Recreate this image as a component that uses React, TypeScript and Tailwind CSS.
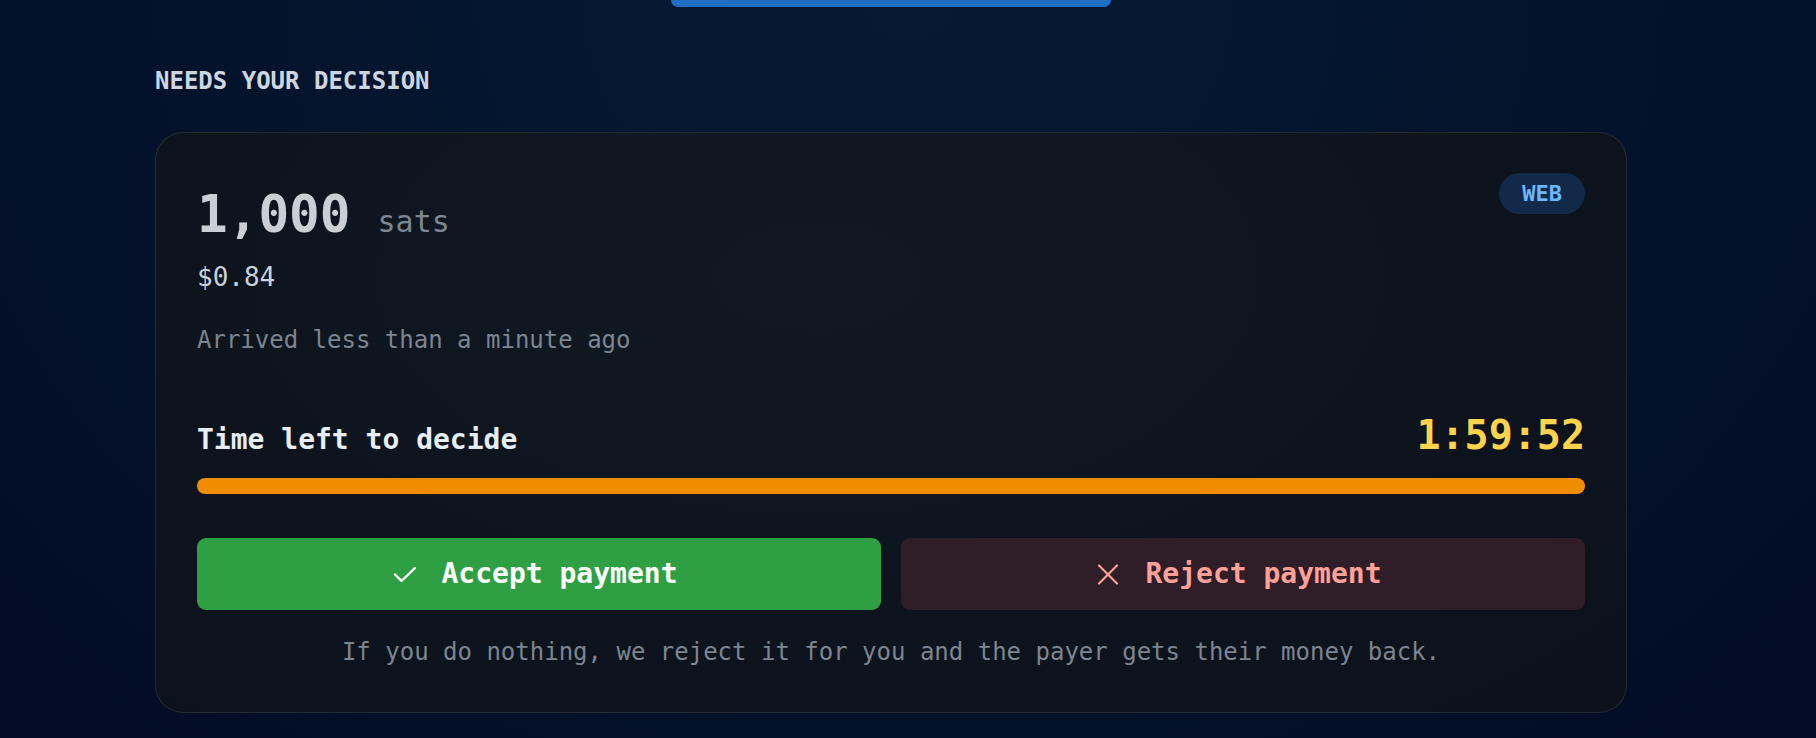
import * as React from 'react';

const mono = { fontFamily: '"DejaVu Sans Mono", "Liberation Mono", monospace' };

const CheckIcon: React.FC = () => (
    <svg width="24" height="17" viewBox="0 0 24 17" fill="none" stroke="currentColor" strokeWidth="2.4" strokeLinecap="round" strokeLinejoin="round">
        <polyline points="2,8.5 8.5,15 22,2" />
    </svg>
);

const XIcon: React.FC = () => (
    <svg width="22" height="21" viewBox="0 0 22 21" fill="none" stroke="currentColor" strokeWidth="2.2" strokeLinecap="round">
        <line x1="2" y1="1.5" x2="20" y2="19.5" />
        <line x1="20" y1="1.5" x2="2" y2="19.5" />
    </svg>
);

const PendingPayment: React.FC = () => (
    <div className="w-[1472px] rounded-[28px] border border-white/10 bg-[#0d141e] px-[41px] pt-[40px] pb-[48px] bg-[radial-gradient(ellipse_at_45%_25%,#101923_0%,#0d141e_55%,#0c121b_100%)]">
        <div className="flex items-start justify-between">
            <div className="mt-[16px] flex flex-col">
                <div className="flex items-baseline">
                    <span className="text-[51px] leading-[52px] font-bold text-[#cacfd5]">1,000</span>
                    <span className="ml-[27px] text-[30px] leading-[30px] text-[#7d8590]">sats</span>
                </div>
                <div className="mt-[23px] text-[26px] leading-[26px] text-[#c9d1d9]">$0.84</div>
                <div className="mt-[38px] text-[24px] leading-[24px] text-[#7d8590]">Arrived less than a minute ago</div>
            </div>
            <span className="flex h-[41px] items-center rounded-full bg-[#12294a] px-[23px] text-[22px] font-bold text-[#6cb6ff]">WEB</span>
        </div>

        <div className="mt-[63px] flex items-baseline justify-between">
            <span className="text-[28px] leading-[28px] font-bold text-[#e6edf3]">Time left to decide</span>
            <span className="text-[40px] leading-[40px] font-bold text-[#fcd34d]">1:59:52</span>
        </div>
        <div className="mt-[23px] h-[16px] w-full rounded-full bg-[#f08c00]" />

        <div className="mt-[44px] grid grid-cols-2 gap-5">
            <button className="flex h-[72px] items-center justify-center gap-[24px] rounded-[9px] bg-[#2ea043] pr-[7px] text-[28px] font-bold text-white">
                <CheckIcon />
                <span>Accept payment</span>
            </button>
            <button className="flex h-[72px] items-center justify-center gap-[26px] rounded-[9px] bg-[#2f1e28] pr-[7px] text-[28px] font-bold text-[#ffa198]">
                <XIcon />
                <span>Reject payment</span>
            </button>
        </div>

        <p className="mt-[30px] text-center text-[24px] leading-[24px] text-[#7d8590]">
            If you do nothing, we reject it for you and the payer gets their money back.
        </p>
    </div>
);

export default function App() {
    return (
        <div
            className="min-h-screen w-full overflow-hidden bg-[#04132b] bg-[radial-gradient(ellipse_at_50%_0%,#061a35_0%,#04142d_45%,#020c24_100%)] pl-[155px]"
            style={mono}
        >
            <div className="w-[1472px]">
                <div className="mx-auto h-[7px] w-[440px] rounded-b-[8px] bg-[#1f6fc5]" />
                <h2 className="mt-[62px] text-[24px] leading-[24px] font-bold text-[#cdd6e0]">NEEDS YOUR DECISION</h2>
                <div className="mt-[39px] pb-[27px]">
                    <PendingPayment />
                </div>
            </div>
        </div>
    );
}
